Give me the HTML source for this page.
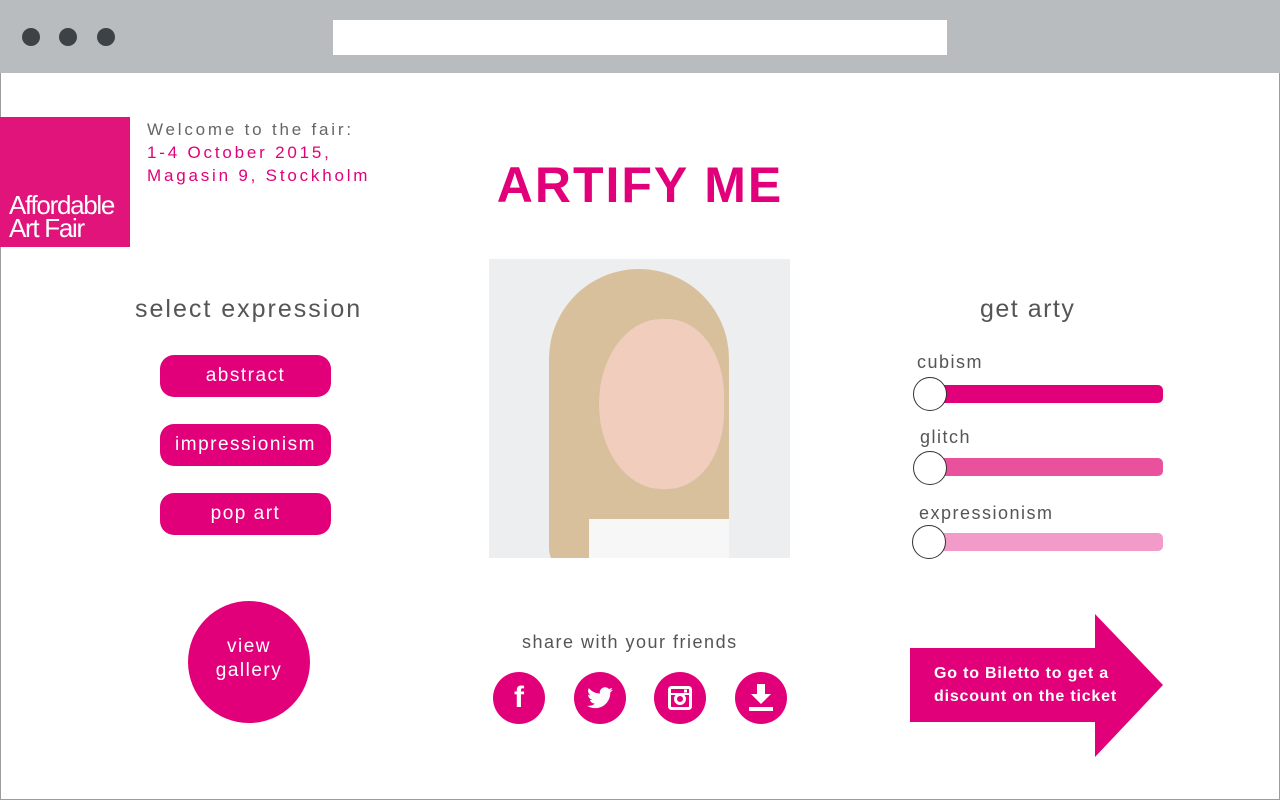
<!DOCTYPE html>
<html><head><style>
*{margin:0;padding:0;box-sizing:border-box}
body{width:1280px;height:800px;position:relative;background:#fff;font-family:"Liberation Sans",sans-serif;overflow:hidden}
.a{position:absolute}
.pill{position:absolute;left:160px;width:171px;height:42px;border-radius:14px;background:#e2007a;color:#fff;font-size:19px;letter-spacing:1.5px;text-align:center;line-height:42px}
.lbl{position:absolute;color:#555;font-size:18px;letter-spacing:1.5px}
.trk{position:absolute;left:930px;width:233px;height:18px;border-radius:5px}
.knob{position:absolute;width:34px;height:34px;border-radius:50%;background:#fff;border:1.5px solid #333}
.ic{position:absolute;top:672px;width:52px;height:52px;border-radius:50%;background:#e2007a}
</style></head><body>
<div class="a" style="left:0;top:0;width:1280px;height:800px;border:1px solid #9a9da0"></div>
<div class="a" style="left:0;top:0;width:1280px;height:73px;background:#b9bcbf"></div>
<div class="a" style="left:22px;top:28px;width:18px;height:18px;border-radius:50%;background:#3d4247"></div>
<div class="a" style="left:59px;top:28px;width:18px;height:18px;border-radius:50%;background:#3d4247"></div>
<div class="a" style="left:97px;top:28px;width:18px;height:18px;border-radius:50%;background:#3d4247"></div>
<div class="a" style="left:333px;top:20px;width:614px;height:35px;background:#fff"></div>

<div class="a" style="left:0;top:117px;width:130px;height:130px;background:#e0147a"></div>
<div class="a" style="left:9px;top:194px;color:#fff;font-size:26px;line-height:23px;letter-spacing:-1.3px">Affordable<br>Art Fair</div>
<div class="a" style="left:147px;top:118px;font-size:17px;line-height:23px;letter-spacing:2.8px;color:#666">Welcome to the fair:<br><span style="color:#e2007a">1-4 October 2015,<br>Magasin 9, Stockholm</span></div>

<div class="a" style="left:440px;top:156px;width:400px;text-align:center;color:#e2007a;font-size:50px;font-weight:bold;letter-spacing:2px">ARTIFY ME</div>

<div class="lbl" style="left:135px;top:295px;font-size:25px;letter-spacing:2px">select expression</div>
<div class="pill" style="top:355px">abstract</div>
<div class="pill" style="top:424px">impressionism</div>
<div class="pill" style="top:493px">pop art</div>
<div class="a" style="left:188px;top:601px;width:122px;height:122px;border-radius:50%;background:#e2007a;color:#fff;font-size:19px;letter-spacing:1.5px;text-align:center;padding-top:34px;line-height:24px">view<br>gallery</div>

<div class="a" style="left:489px;top:259px;width:301px;height:299px;overflow:hidden;background:#eceeef">
<div class="a" style="left:60px;top:10px;width:180px;height:300px;border-radius:90px 90px 20px 20px;background:#d8c09c"></div>
<div class="a" style="left:110px;top:60px;width:125px;height:170px;border-radius:50% 45% 45% 50%;background:#f1cdbe"></div>
<div class="a" style="left:100px;top:260px;width:140px;height:50px;background:#f7f7f7"></div>
</div>

<div class="lbl" style="left:980px;top:295px;font-size:25px">get arty</div>
<div class="lbl" style="left:917px;top:352px">cubism</div>
<div class="lbl" style="left:920px;top:427px">glitch</div>
<div class="lbl" style="left:919px;top:503px">expressionism</div>
<div class="trk" style="top:385px;background:#e2007a"></div>
<div class="trk" style="top:458px;background:#e9519c"></div>
<div class="trk" style="top:533px;background:#f29ac8"></div>
<div class="knob" style="left:913px;top:377px"></div>
<div class="knob" style="left:913px;top:451px"></div>
<div class="knob" style="left:912px;top:525px"></div>

<div class="lbl" style="left:522px;top:632px">share with your friends</div>
<div class="ic" style="left:493px"><div class="a" style="left:0;top:9px;width:52px;text-align:center;color:#fff;font-size:30px;font-weight:bold">f</div></div>
<div class="ic" style="left:574px"><svg class="a" style="left:13px;top:14px" width="26" height="24" viewBox="0 0 24 20"><path fill="#fff" d="M24 2.4a10 10 0 0 1-2.8.8 5 5 0 0 0 2.2-2.7 10 10 0 0 1-3.1 1.2A4.9 4.9 0 0 0 11.9 6 14 14 0 0 1 1.7.9a4.9 4.9 0 0 0 1.5 6.6 5 5 0 0 1-2.2-.6 4.9 4.9 0 0 0 3.9 4.8 5 5 0 0 1-2.2.1 4.9 4.9 0 0 0 4.6 3.4A9.9 9.9 0 0 1 0 17.2 14 14 0 0 0 7.5 19.4c9 0 14-7.5 14-14v-.6A10 10 0 0 0 24 2.4z"/></svg></div>
<div class="ic" style="left:654px"><svg class="a" style="left:14px;top:14px" width="24" height="24" viewBox="0 0 24 24"><rect x="1.5" y="1.5" width="21" height="21" rx="2" fill="none" stroke="#fff" stroke-width="3"/><rect x="1" y="7" width="22" height="2" fill="#fff"/><circle cx="12" cy="13" r="4.5" fill="#e2007a" stroke="#fff" stroke-width="3"/><rect x="16" y="3.5" width="3" height="3" fill="#fff"/></svg></div>
<div class="ic" style="left:735px"><svg class="a" style="left:13px;top:12px" width="26" height="28" viewBox="0 0 26 28"><path fill="#fff" d="M9 0h8v10h6l-10 10L3 10h6z"/><rect x="1" y="23" width="24" height="4" fill="#fff"/></svg></div>

<svg class="a" style="left:910px;top:614px" width="254" height="144"><path fill="#e2007a" d="M0 34H185V0L253 71 185 143V108H0z"/></svg>
<div class="a" style="left:934px;top:662px;color:#fff;font-size:16px;font-weight:bold;letter-spacing:0.8px;line-height:23px">Go to Biletto to get a<br>discount on the ticket</div>
</body></html>
